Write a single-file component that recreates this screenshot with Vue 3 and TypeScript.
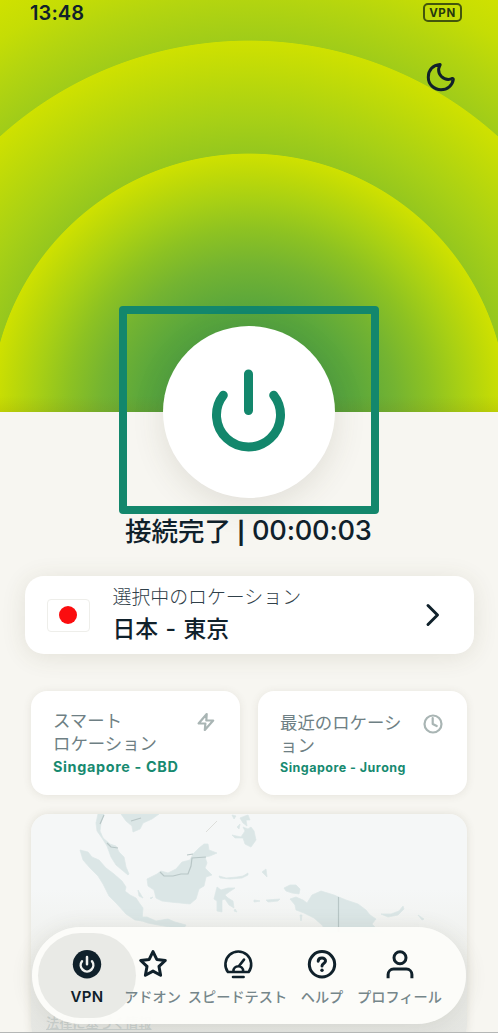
<script setup lang="ts">
interface NavItem {
  id: string
  label: string
}

const items: NavItem[] = [
  { id: 'vpn', label: 'VPN' },
  { id: 'addon', label: 'アドオン' },
  { id: 'speed', label: 'スピードテスト' },
  { id: 'help', label: 'ヘルプ' },
  { id: 'profile', label: 'プロフィール' },
]
const active = 'vpn'
</script>

<template>
  <div class="screen">
    <header class="hero">
      <div class="status">
        <span class="clock">13:48</span>
        <span class="badge">VPN</span>
      </div>
      <svg class="moon" viewBox="0 0 30 30" width="30" height="30">
        <path d="M14 2.600C7 3 2.300 8 2.300 15.200c0 7.200 5.600 12.500 12.700 12.500 6.500 0 11.400-4.200 12.300-10.200.1-.8-.5-1.300-1.200-1-1.300.6-2.500.9-3.800.9-5.400 0-9.700-4.500-9.700-9.700 0-1.200.4-2.400.9-3.400.5-1 .9-1.800.5-1.700Z" />
      </svg>
      <div class="frame">
        <div class="power">
          <svg viewBox="0 0 172 172" width="172" height="172">
            <path d="M85.500 48v36.500M60.300 69.300a32 32 0 1 0 50.400 0" />
          </svg>
        </div>
      </div>
    </header>

    <h1 class="state"><span class="jp">接続完了</span><span class="bar">|</span><span class="time">00:00:03</span></h1>

    <section class="location">
      <span class="flag"><i></i></span>
      <div class="loc-text">
        <small>選択中のロケーション</small>
        <strong>日本 - 東京</strong>
      </div>
      <svg class="chevron" viewBox="0 0 18 26" width="18" height="26"><path d="M4 3.500l9.500 9.500-9.500 9.500" /></svg>
    </section>

    <section class="cards">
      <article class="card smart">
        <div class="card-title">スマート<br />ロケーション</div>
        <b>Singapore - CBD</b>
        <svg class="card-icon" viewBox="0 0 22 22" width="22" height="22"><path d="M11.700 3L3.600 12.500h6.800l-.6 6.500 8.400-9.500h-6.900z" /></svg>
      </article>
      <article class="card recent">
        <div class="card-title">最近のロケーシ<br />ョン</div>
        <b>Singapore - Jurong</b>
        <svg class="card-icon" viewBox="0 0 22 22" width="22" height="22"><circle cx="11" cy="11" r="8.500" /><path d="M10.700 5v6l4 2" /></svg>
      </article>
    </section>

    <section class="map">
      <svg viewBox="31 814 436 218" width="436" height="218">
        <g class="land">
          <path d="M98 814l6 0-3 9-1 8 3 7 7 6 6 2 3 6 5 5 2 10 3 7-1 1-6-5-6-5-5-8-4-11-5-8-5-7-1-8z" />
          <path d="M121 814h38l-7 5-9 4-3 6-7 3-1-6-6-5z" />
          <path d="M80 850l8 2 4 5 7 3 7 8 8 6 8 7 4 6-1 4 5 4 6 3 4 6 3 4-1 13-7-1-9-6-9-10-8-8-6-12-5-8-8-8-7-8z" />
          <path d="M139 917l8 0 9 4 12-2 7 3 11 3-2 3-14-1-12-2-10-2-9-3z" />
          <path d="M157 874l4-3 7 2 8-4 6-7 8-2 3-6 6-6 5-4 4 0 1 6 8 3-7 3-5 1 2 6-2 5 7 7-6 2-2 9-5 3-3 10-6 5-10-1-10-1-8-1-6-3-2-8-6-4-1-7z" />
          <path d="M217 887l4 3 7-2 7 0-6 4-4 3 3 3 5 3 1 7-5-3-4-6-3 1 0 12-5-1 0-10-3-2 2-8z" />
          <path d="M219 876l7 2 11-1 6-1 5-3 0 2-6 3-12 1-10-1z" />
          <path d="M232 835l9 2 4-6-2-4 5 2 3-2 3 4 2 9-5 7-6-3-2-6-8 0z" />
          <path d="M232 815l4 1-2 3zM240 818l5-2 3-1 2 5-4 0 1 6-4-3zM237 827l3-3-1 5z" />
          <path d="M284 888l6-3 6 0 4 4-1 5-7-1-6-2z" />
          <path d="M290 899l6-2 7 3 4 3 5-8 9-4 13 4 12 5 12 4 8 6 4 5 6 4-4 5 5 5 7 4-57 0-5-8-8-7-10-5-8-3-1-5z" />
          <path d="M381 914l10 0 8-3 4-5 1 3-6 6-10 2zM418 915l6 4-2 1zM300 915l2 0-1 6zM266 900l14-1-2 2-10 1zM254 900l6 1-6 1zM138 890l5 8-4-2zM150 898l3-1-2 2zM235 909l2 3-3-1zM262 872l4-3 1 8z" />
        </g>
        <path class="border" d="M104 815l-4 9M107 843l4 4 7 1M131 821l10-3M160 872l4 4 9 0 8-2 7 0 3-8 1-8 14-1M187 855l6-1M338.500 897v35" />
        <path class="dash" d="M206 832l11-11" />
      </svg>
    </section>

    <div class="legal">法律に基づく情報</div>

    <nav class="nav">
      <span class="pill"></span>
      <a v-for="item in items" :key="item.id" :class="['tab', item.id, { on: item.id === active }]">
        <svg viewBox="0 0 30 30" width="30" height="30">
          <g v-if="item.id === 'vpn'">
            <circle class="solid" cx="15" cy="15.200" r="14.200" />
            <path class="light" d="M15 8v7.200M10 12.300a6.300 6.300 0 1 0 10 0" />
          </g>
          <path v-else-if="item.id === 'addon'" d="M15 2.600l3.800 7.800 8.500 1.100-6.300 5.900 1.600 8.900-7.600-4.200-7.600 4.200 1.600-8.900-6.300-5.900 8.500-1.100z" />
          <g v-else-if="item.id === 'speed'">
            <path d="M4.900 23a12.900 12.900 0 1 1 20.800 0zM10.400 23v-.8a4.900 4.900 0 0 1 9.800 0v.8M15.800 17.300l5.200-6.700M10 28h10.600" />
          </g>
          <g v-else-if="item.id === 'help'">
            <circle cx="15" cy="15.300" r="12.700" />
            <path d="M11.200 12.200c.4-4.400 7.600-3.900 7.300 0-.2 2.400-3.500 2.300-3.500 4.700" />
            <circle class="solid" cx="15" cy="21.300" r="1.700" />
          </g>
          <g v-else class="person">
            <circle cx="15" cy="8.700" r="6" />
            <path d="M3.100 29.300v-3.700a5.500 5.500 0 0 1 5.500-5.500h12.800a5.500 5.500 0 0 1 5.500 5.500v3.700" />
          </g>
        </svg>
        <span>{{ item.label }}</span>
      </a>
    </nav>
  </div>
</template>

<style>
html, body { margin: 0; background: #fff; overflow: hidden; }
</style>

<style scoped>
* { box-sizing: border-box; }
.screen {
  position: relative;
  width: 498px;
  height: 1033px;
  overflow: hidden;
  border-bottom: 1px solid #b5b7b6;
  background: #f7f6f1;
  color: #10212b;
  font-family: Inter, "Noto Sans CJK JP", sans-serif;
}
.hero {
  position: relative;
  height: 412px;
  background:
    linear-gradient(to top, rgba(120, 100, 0, .12), transparent 16px),
    radial-gradient(circle at 249px 412px,
      #4fa040 80px, #5da83b 110px, #74b431 148px, #8dc222 182px, #a8d014 213px, #bed908 238px, #cfe100 258px,
      #95c71e 258.800px, #a7d016 293px, #bad80b 330px, #cfe100 371px,
      #a0cc19 371.800px, #b4d50f 414px, #c5dd05 448px, #cfe100 480px);
}
.status { display: flex; justify-content: space-between; padding: 3px 36px 0 30px; }
.clock { font-size: 20px; line-height: 20px; font-weight: 600; letter-spacing: .1px; }
.badge {
  width: 39px; height: 19px; border: 2px solid #43560c; border-radius: 5px;
  color: #26380f; font-size: 11.500px; line-height: 16px; font-weight: 700; letter-spacing: .6px; text-align: center;
}
.moon { position: absolute; left: 426px; top: 62px; fill: none; stroke: #10212b; stroke-width: 3; stroke-linejoin: round; }
.frame {
  position: absolute; z-index: 1; left: 119px; top: 306px; width: 260px; height: 208px;
  border: 8px solid #13876c; border-radius: 4px; padding: 12px 36px;
}
.power { width: 172px; height: 172px; border-radius: 50%; background: #fff; box-shadow: 0 8px 32px rgba(80, 70, 45, .13); }
.power svg { display: block; fill: none; stroke: #13876c; stroke-width: 9; stroke-linecap: round; }
.state {
  display: flex; margin: 101px 0 0 125px; height: 36px; line-height: 36px; font-size: 27.200px; font-weight: 500;
  white-space: nowrap;
}
.state .jp { width: 112px; font-size: 26.500px; }
.state .bar { width: 15px; font-size: 22px; font-weight: 700; line-height: 40px; }
.state .time { letter-spacing: -.2px; }
.location {
  display: flex; align-items: center; width: 449px; height: 78px; margin: 27px 0 0 24.500px; padding: 0 32px 0 22px;
  border-radius: 19px; background: #fff; box-shadow: 0 3px 24px rgba(80, 70, 45, .12);
}
.flag { display: grid; place-items: center; width: 43px; height: 33px; border: 1px solid #eeeeea; border-radius: 4px; }
.flag i { width: 18px; height: 18px; border-radius: 50%; background: #fb0d0f; }
.loc-text { display: flex; flex-direction: column; margin-left: 23px; flex: 1; }
.loc-text small { font-size: 18.900px; line-height: 27px; font-weight: 300; color: #304049; margin-top: -1px; }
.loc-text strong { font-size: 22.800px; line-height: 34px; font-weight: 500; margin-top: 1px; word-spacing: 1.300px; }
.chevron { fill: none; stroke: #10212b; stroke-width: 3; stroke-linecap: round; stroke-linejoin: round; }
.cards { display: flex; gap: 18px; margin: 37px 0 0 31px; }
.card {
  position: relative; width: 209px; height: 104px; padding: 19px 0 0 22px; border-radius: 16px; background: #fff;
  box-shadow: 0 1px 9px rgba(80, 70, 45, .1);
}
.card-title { font-size: 17.400px; line-height: 22.500px; color: #6e7f84; }
.card b { display: block; font-size: 14.400px; line-height: 18px; font-weight: 700; color: #178a70; letter-spacing: .65px; margin-top: 3px; }
.card-icon { position: absolute; right: 23px; top: 20px; fill: none; stroke: #a9b5b4; stroke-width: 2.200; stroke-linejoin: round; stroke-linecap: round; }
.recent { padding-top: 21px; }
.recent b { font-size: 12.500px; letter-spacing: .48px; margin-top: 2px; }
.recent .card-icon { top: 22px; }
.map {
  width: 436px; height: 230px; margin: 19px 0 0 31px; border-radius: 18px; overflow: hidden;
  background: linear-gradient(#f5f7f7 75px, #f0f1ee 130px, #e5e6e2 218px);
  box-shadow: 0 0 9px rgba(80, 70, 45, .13);
}
.map svg { display: block; }
.land { fill: #dbe6e6; stroke: #dbe6e6; stroke-width: .7; stroke-linejoin: round; }
.border { fill: none; stroke: #b8c6c6; stroke-width: 1.200; }
.dash { fill: none; stroke: #dddeda; }
.legal {
  position: absolute; left: 46px; top: 1015px; height: 18px; font-size: 13.200px; line-height: 17px;
  font-weight: 500; color: #cad0ce; text-decoration: underline;
}
.nav {
  position: absolute; left: 32px; top: 927px; width: 434px; height: 97px; border-radius: 49px;
  background: rgba(252, 252, 249, .97); box-shadow: 0 2px 22px rgba(70, 70, 50, .12);
  display: grid; grid-template-columns: 88px 43px 127px 42px 113px; padding-left: 11px;
}
.pill { position: absolute; left: 6px; top: 6px; width: 98px; height: 85px; border-radius: 43px; background: #e9eae6; }
.tab {
  position: relative; display: flex; flex-direction: column; align-items: center; padding-top: 22px;
  color: #75868a; font-size: 14.200px; line-height: 22px; white-space: nowrap; font-weight: 500;
}
.tab svg { flex: none; fill: none; stroke: #10212b; stroke-width: 3; stroke-linejoin: round; stroke-linecap: round; }
.tab span { margin-top: 7px; }
.tab .solid { fill: #10212b; stroke: none; }
.tab .light { stroke: #f0f1ee; stroke-width: 2.500; }
.tab .person { stroke-linecap: butt; }
.tab.on { color: #10212b; font-weight: 600; font-size: 15px; letter-spacing: .4px; }
.speed svg { stroke-width: 2.600; }
</style>
